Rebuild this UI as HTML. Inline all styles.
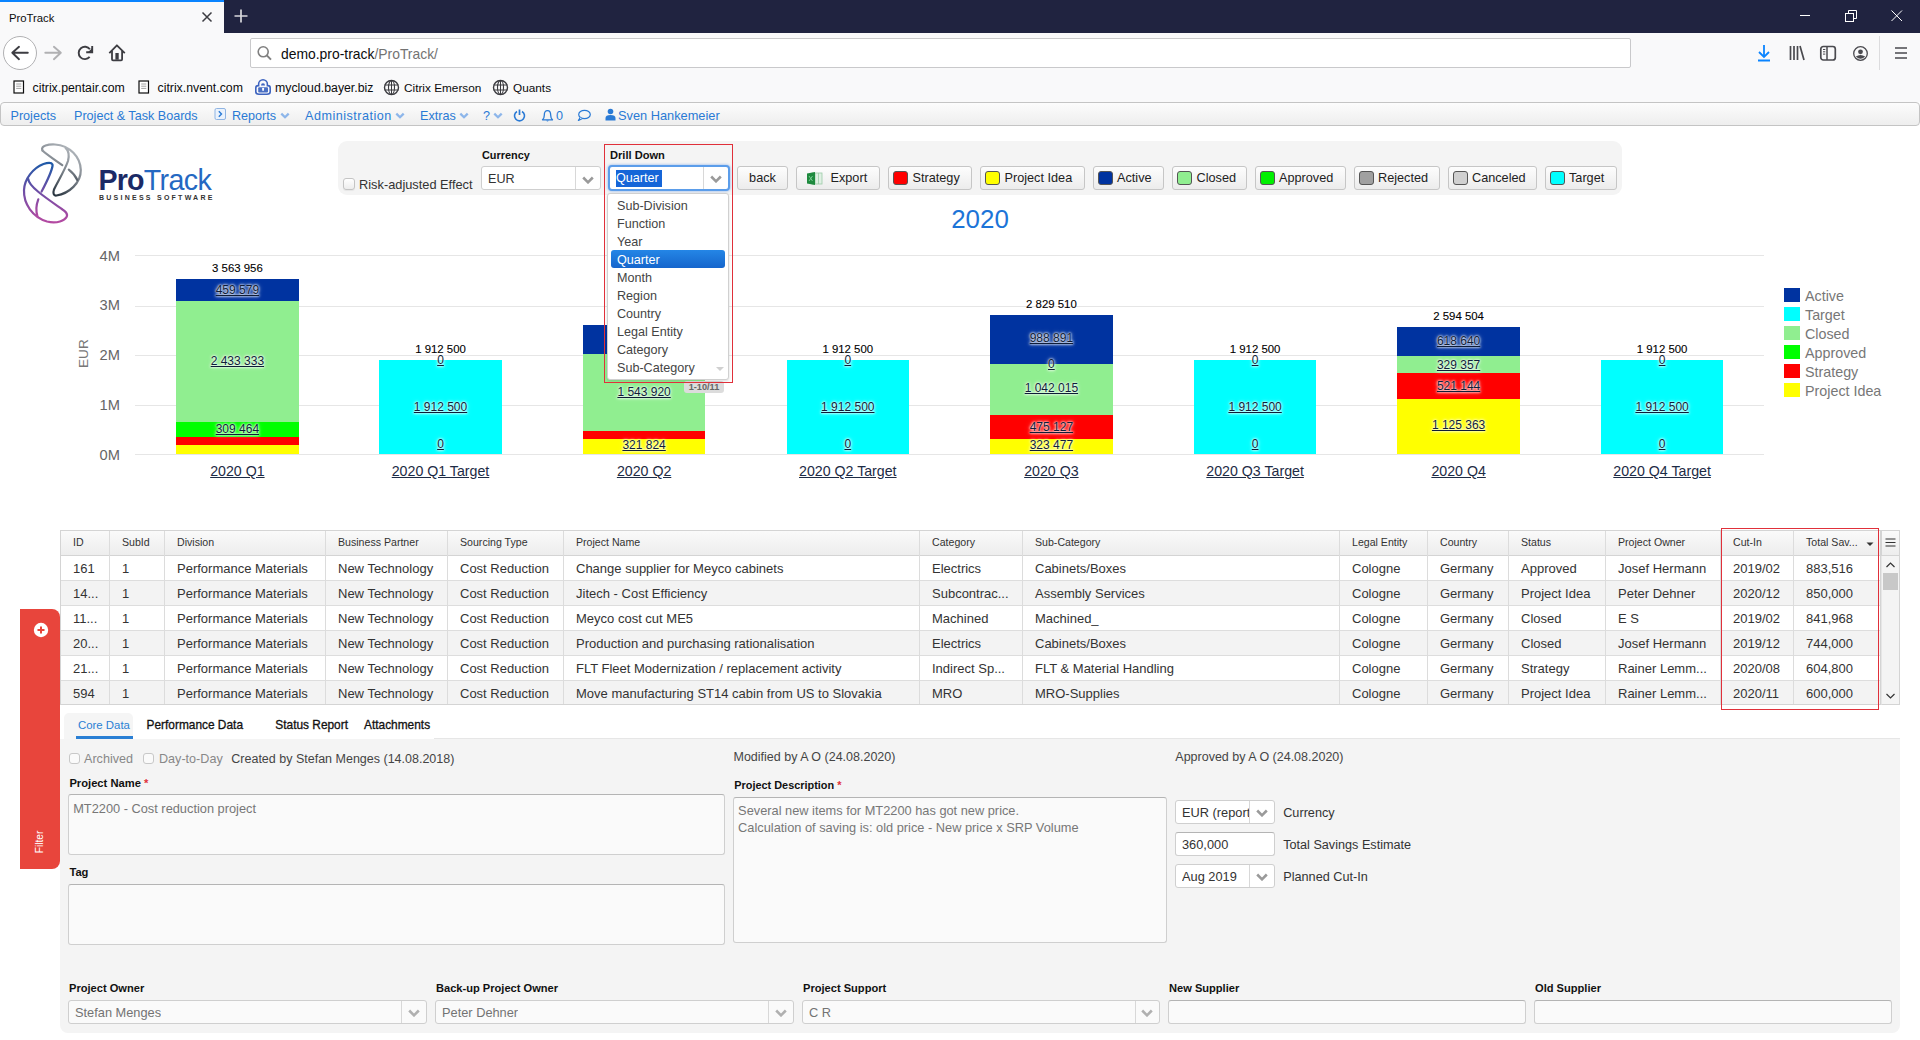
<!DOCTYPE html>
<html><head><meta charset="utf-8"><title>ProTrack</title>
<style>
html,body{margin:0;padding:0;width:1920px;height:1040px;overflow:hidden;background:#fff;position:relative}
body{font-family:"Liberation Sans", sans-serif}
.t{position:absolute;white-space:nowrap}
.r{position:absolute}
</style></head><body>
<div class="r" style="left:0px;top:0px;width:1920px;height:33px;background:#202340"></div>
<div class="r" style="left:0px;top:0px;width:224px;height:33px;background:#f9f9fa"></div>
<div class="r" style="left:0px;top:0px;width:224px;height:2px;background:#0a84ff"></div>
<div class="t " style="left:9px;top:10.5px;font-size:11.3px;line-height:15px;color:#0c0c0d;font-weight:normal;">ProTrack</div>
<svg class="r" style="left:201px;top:11px;" width="12" height="12" viewBox="0 0 12 12"><path d="M1.5 1.5L10.5 10.5M10.5 1.5L1.5 10.5" stroke="#3d3d42" stroke-width="1.5"/></svg>
<svg class="r" style="left:233px;top:8px;" width="16" height="16" viewBox="0 0 16 16"><path d="M8 1.5V14.5M1.5 8H14.5" stroke="#d8d8dc" stroke-width="1.7"/></svg>
<svg class="r" style="left:1798px;top:10px;" width="14" height="12" viewBox="0 0 14 12"><path d="M2 5.5H12" stroke="#fff" stroke-width="1"/></svg>
<svg class="r" style="left:1844px;top:9px;" width="14" height="14" viewBox="0 0 14 14"><rect x="1.5" y="4.5" width="8" height="8" fill="none" stroke="#fff" stroke-width="1"/><path d="M4.5 4.5V1.5H12.5V9.5H9.5" fill="none" stroke="#fff" stroke-width="1"/></svg>
<svg class="r" style="left:1890px;top:9px;" width="14" height="14" viewBox="0 0 14 14"><path d="M1.5 1.5L12 12M12 1.5L1.5 12" stroke="#fff" stroke-width="1"/></svg>
<div class="r" style="left:0px;top:33px;width:1920px;height:69px;background:#f9f9fa"></div>
<div class="r" style="left:3px;top:36px;width:34px;height:34px;border:1px solid #b1b1b3;border-radius:50%;box-sizing:border-box;background:#fff"></div>
<svg class="r" style="left:8px;top:44px;" width="22" height="18" viewBox="0 0 22 18"><path d="M4.3 8.8H19.8M4.3 8.8L11 2.8M4.3 8.8L11 15.2" fill="none" stroke="#3d3d42" stroke-width="1.9" stroke-linecap="round" stroke-linejoin="round"/></svg>
<svg class="r" style="left:42px;top:44px;" width="22" height="18" viewBox="0 0 22 18"><path d="M3.3 8.8H18.8M18.8 8.8L11.9 2.8M18.8 8.8L11.9 15.2" fill="none" stroke="#b1b1b3" stroke-width="1.9" stroke-linecap="round" stroke-linejoin="round"/></svg>
<svg class="r" style="left:77px;top:45px;" width="17" height="16" viewBox="0 0 17 16"><path d="M12.65 11.89A6.2 6.2 0 1 1 12.92 4.26" fill="none" stroke="#3d3d42" stroke-width="1.9"/><path d="M9.2 7.2H15.2V1.1" fill="none" stroke="#3d3d42" stroke-width="1.9"/><path d="M11 7.2H15.2V3Z" fill="#3d3d42"/></svg>
<svg class="r" style="left:108px;top:44px;" width="18" height="18" viewBox="0 0 18 18"><path d="M1.3 9.2L8.9 1.3L16.8 9.2" fill="none" stroke="#3d3d42" stroke-width="1.8" stroke-linejoin="round"/><path d="M4 7V15.3Q4 16.3 5 16.3H13.1Q14.1 16.3 14.1 15.3V7" fill="none" stroke="#3d3d42" stroke-width="1.8"/><rect x="7.4" y="9" width="3.3" height="6.7" fill="#3d3d42"/></svg>
<div class="r" style="left:250px;top:38px;width:1381px;height:30px;background:#fff;border:1px solid #c9c9cb;border-radius:2px;box-sizing:border-box"></div>
<svg class="r" style="left:256px;top:45px;" width="18" height="18" viewBox="0 0 18 18"><circle cx="7.2" cy="6.8" r="5" fill="none" stroke="#808080" stroke-width="1.6"/><path d="M10.8 10.4L15 14.6" stroke="#808080" stroke-width="2"/></svg>
<div class="t " style="left:281px;top:45.0px;font-size:13.9px;line-height:18px;color:#0c0c0d;font-weight:normal;">demo.pro-track<span style="color:#737373">/ProTrack/</span></div>
<svg class="r" style="left:1756px;top:43px;" width="16" height="20" viewBox="0 0 16 20"><path d="M8 2V14M3 9L8 14L13 9" fill="none" stroke="#0a84ff" stroke-width="1.8"/><path d="M2 17.5H14" stroke="#0a84ff" stroke-width="2"/></svg>
<svg class="r" style="left:1788px;top:45px;" width="18" height="16" viewBox="0 0 18 16"><path d="M2.5 1V15M6 1V15M9.5 1V15M12 1L16 15" stroke="#4a4a4f" stroke-width="1.7"/></svg>
<svg class="r" style="left:1819px;top:45px;" width="18" height="17" viewBox="0 0 18 17"><rect x="1.8" y="1.5" width="14.5" height="13.5" rx="2.5" fill="none" stroke="#4a4a4f" stroke-width="1.7"/><path d="M8 1.5V15" stroke="#4a4a4f" stroke-width="1.5"/><path d="M4 4.5H6.3M4 6.8H6.3M4 9.1H6.3" stroke="#4a4a4f" stroke-width="1"/></svg>
<svg class="r" style="left:1852px;top:45px;" width="17" height="17" viewBox="0 0 17 17"><circle cx="8.5" cy="8.5" r="6.8" fill="none" stroke="#4a4a4f" stroke-width="1.3"/><circle cx="8.5" cy="6.8" r="2.4" fill="#4a4a4f"/><path d="M3.8 11.6Q8.5 8.3 13.2 11.6Q8.5 16 3.8 11.6Z" fill="#4a4a4f"/></svg>
<div class="r" style="left:1879px;top:36px;width:1px;height:34px;background:#dcdcde"></div>
<svg class="r" style="left:1894px;top:46px;" width="14" height="14" viewBox="0 0 14 14"><path d="M1 2H13M1 7H13M1 12H13" stroke="#4a4a4f" stroke-width="1.7"/></svg>
<svg class="r" style="left:13px;top:80px;" width="12" height="15" viewBox="0 0 12 15"><rect x="1" y="1" width="9.5" height="12" fill="#fff" stroke="#0c0c0d" stroke-width="1.2"/><path d="M3.2 4H8.3M3.2 6.2H8.3M3.2 8.4H8.3" stroke="#8a8a8a" stroke-width="0.8"/></svg>
<div class="t " style="left:32.5px;top:80.2px;font-size:12.3px;line-height:16px;color:#0c0c0d;font-weight:normal;">citrix.pentair.com</div>
<svg class="r" style="left:138px;top:80px;" width="12" height="15" viewBox="0 0 12 15"><rect x="1" y="1" width="9.5" height="12" fill="#fff" stroke="#0c0c0d" stroke-width="1.2"/><path d="M3.2 4H8.3M3.2 6.2H8.3M3.2 8.4H8.3" stroke="#8a8a8a" stroke-width="0.8"/></svg>
<div class="t " style="left:157.5px;top:80.2px;font-size:12.3px;line-height:16px;color:#0c0c0d;font-weight:normal;">citrix.nvent.com</div>
<svg class="r" style="left:255px;top:79px;" width="16" height="16" viewBox="0 0 16 16"><path d="M3.6 6.6V5.2A4.4 4.4 0 0 1 12.4 5.2V6.6H13Q15.2 6.6 15.2 9V12.8Q15.2 15.2 12 15.2H4Q0.8 15.2 0.8 12.8V9Q0.8 6.6 3 6.6Z" fill="none" stroke="#3d63bf" stroke-width="1.6"/><path d="M6 6.5A2 2.3 0 0 1 10 6.5Z" fill="#3d63bf"/><rect x="3.2" y="8.2" width="9.8" height="5.4" rx="1" fill="#4a6fc3"/><path d="M7 9.8A1.1 1.1 0 1 1 9.2 9.8L8.6 12H7.6Z" fill="#fff"/></svg>
<div class="t " style="left:275px;top:80.2px;font-size:12.3px;line-height:16px;color:#0c0c0d;font-weight:normal;">mycloud.bayer.biz</div>
<svg class="r" style="left:383px;top:79px;" width="17" height="17" viewBox="0 0 17 17"><circle cx="8.5" cy="8.5" r="7" fill="none" stroke="#3a3a3f" stroke-width="1.4"/><ellipse cx="8.5" cy="8.5" rx="3" ry="7" fill="none" stroke="#3a3a3f" stroke-width="1.1"/><path d="M1.5 6H15.5M1.5 11H15.5M8.5 1.5V15.5" stroke="#3a3a3f" stroke-width="1"/></svg>
<div class="t " style="left:404px;top:80.7px;font-size:11.8px;line-height:15px;color:#0c0c0d;font-weight:normal;">Citrix Emerson</div>
<svg class="r" style="left:492px;top:79px;" width="17" height="17" viewBox="0 0 17 17"><circle cx="8.5" cy="8.5" r="7" fill="none" stroke="#3a3a3f" stroke-width="1.4"/><ellipse cx="8.5" cy="8.5" rx="3" ry="7" fill="none" stroke="#3a3a3f" stroke-width="1.1"/><path d="M1.5 6H15.5M1.5 11H15.5M8.5 1.5V15.5" stroke="#3a3a3f" stroke-width="1"/></svg>
<div class="t " style="left:513px;top:80.7px;font-size:11.8px;line-height:15px;color:#0c0c0d;font-weight:normal;">Quants</div>
<div class="r" style="left:0px;top:102px;width:1920px;height:24px;border:1px solid #c4c4c4;border-radius:4px;box-sizing:border-box;background:linear-gradient(#fcfcfc,#eeeeee)"></div>
<div class="t " style="left:10.5px;top:107.7px;font-size:12.6px;line-height:16px;color:#2a7ad5;font-weight:normal;">Projects</div>
<div class="t " style="left:74px;top:107.7px;font-size:12.6px;line-height:16px;color:#2a7ad5;font-weight:normal;">Project &amp; Task Boards</div>
<svg class="r" style="left:214px;top:107px;" width="13" height="14" viewBox="0 0 13 14"><rect x="1" y="1.5" width="10.5" height="11" rx="1.5" fill="#eaf2fc" stroke="#8fb4e3" stroke-width="1"/><path d="M4.8 4.3L7.5 7L4.8 9.7" fill="none" stroke="#2a7ad5" stroke-width="1.4"/></svg>
<div class="t " style="left:232px;top:107.7px;font-size:12.6px;line-height:16px;color:#2a7ad5;font-weight:normal;">Reports</div>
<svg class="r" style="left:280px;top:112px;" width="10" height="7" viewBox="0 0 10 7"><path d="M1.3 1.6L5 5.2L8.7 1.6" fill="none" stroke="#8db6ea" stroke-width="2.3"/></svg>
<div class="t " style="left:305px;top:107.7px;font-size:12.6px;line-height:16px;color:#2a7ad5;font-weight:normal;letter-spacing:0.5px">Administration</div>
<svg class="r" style="left:395px;top:112px;" width="10" height="7" viewBox="0 0 10 7"><path d="M1.3 1.6L5 5.2L8.7 1.6" fill="none" stroke="#8db6ea" stroke-width="2.3"/></svg>
<div class="t " style="left:420px;top:107.7px;font-size:12.6px;line-height:16px;color:#2a7ad5;font-weight:normal;">Extras</div>
<svg class="r" style="left:459px;top:112px;" width="10" height="7" viewBox="0 0 10 7"><path d="M1.3 1.6L5 5.2L8.7 1.6" fill="none" stroke="#8db6ea" stroke-width="2.3"/></svg>
<div class="t " style="left:483px;top:107.7px;font-size:12.6px;line-height:16px;color:#2a7ad5;font-weight:normal;">?</div>
<svg class="r" style="left:493px;top:112px;" width="10" height="7" viewBox="0 0 10 7"><path d="M1.3 1.6L5 5.2L8.7 1.6" fill="none" stroke="#8db6ea" stroke-width="2.3"/></svg>
<svg class="r" style="left:513px;top:108px;" width="13" height="14" viewBox="0 0 13 14"><path d="M4 3.5A5 5 0 1 0 9 3.5" fill="none" stroke="#2a7ad5" stroke-width="1.6"/><path d="M6.5 1.5V7" stroke="#2a7ad5" stroke-width="1.7"/></svg>
<svg class="r" style="left:541px;top:109px;" width="13" height="14" viewBox="0 0 13 14"><path d="M1.5 10.8Q3.3 9.2 3.3 6.2Q3.3 1.6 6.5 1.6Q9.7 1.6 9.7 6.2Q9.7 9.2 11.5 10.8Z" fill="none" stroke="#2a7ad5" stroke-width="1.3" stroke-linejoin="round"/><path d="M5.2 11.6Q6.5 13.6 7.8 11.6Z" fill="#2a7ad5"/></svg>
<div class="t " style="left:556px;top:107.7px;font-size:12.6px;line-height:16px;color:#2a7ad5;font-weight:normal;">0</div>
<svg class="r" style="left:577px;top:109px;" width="14" height="12" viewBox="0 0 14 12"><ellipse cx="7.5" cy="5.5" rx="5.8" ry="4.2" fill="none" stroke="#2a7ad5" stroke-width="1.2"/><path d="M3 8.5L1.5 11.5L5.5 9.6" fill="#fff" stroke="#2a7ad5" stroke-width="1.1"/></svg>
<svg class="r" style="left:605px;top:108px;" width="11" height="13" viewBox="0 0 11 13"><circle cx="5.5" cy="3.5" r="2.8" fill="#2a7ad5"/><path d="M0.5 12.5V10Q0.5 7 5.5 7Q10.5 7 10.5 10V12.5Z" fill="#2a7ad5"/></svg>
<div class="t " style="left:618px;top:107.2px;font-size:12.8px;line-height:17px;color:#2a7ad5;font-weight:normal;">Sven Hankemeier</div>
<svg class="r" style="left:18px;top:140px" width="70" height="88" viewBox="0 0 70 88">
<defs>
<linearGradient id="lg1" x1="0" y1="0" x2="0" y2="1"><stop offset="0" stop-color="#1f5aa8"/><stop offset="0.45" stop-color="#6a4ea6"/><stop offset="1" stop-color="#b44aa2"/></linearGradient>
<linearGradient id="lg2" x1="0.8" y1="0" x2="0.3" y2="1"><stop offset="0" stop-color="#b9bec3"/><stop offset="0.5" stop-color="#7d848c"/><stop offset="1" stop-color="#25313c"/></linearGradient>
</defs>
<g fill="none" stroke-width="2.2" stroke-linecap="round">
<path d="M24.5 10.5C22 5.5 31 4.2 37 4.5C52 5.5 62.5 17 62.8 30C63 43 51 53.5 38.5 55.5C35.5 56 34.8 53 36 49.5C39.5 42 46.5 31 50 21C51.5 15 50.5 10.5 47.4 7.6" stroke="url(#lg2)"/>
<path d="M24.5 10.5C28 14 37 20 44.3 25.2M50.8 29.6C54 32 57.5 36 59.3 40" stroke="url(#lg2)"/>
<path d="M34.5 24.5C33.5 22.3 29 22.8 25.5 24C15 28 6.5 39 6 50C5.5 64 14.5 77 29 81.5C39 84 47 80.5 48.8 76.5C49.8 74 47.5 71.5 44.5 69.5C36 63.5 26.5 57 20.5 52C15 47.5 10.5 43.5 10.3 39" stroke="url(#lg1)"/>
<path d="M34.6 25.5C34 30 31.5 36.5 23.6 51.6M20.3 59.3C18.3 64.5 17.6 70.5 19.5 76.5" stroke="url(#lg1)"/>
</g>
</svg>
<div class="t " style="left:98.5px;top:163.0px;font-size:28.6px;line-height:34px;color:#1d2f6e;font-weight:normal;"><span style="color:#1b2a66;font-weight:bold;letter-spacing:-0.8px">Pro</span><span style="color:#2468c2;letter-spacing:-0.6px">Track</span></div>
<div class="t " style="left:99px;top:193.0px;font-size:7px;line-height:9px;color:#333;font-weight:bold;letter-spacing:2.25px">BUSINESS SOFTWARE</div>
<div class="r" style="left:338px;top:141px;width:1284px;height:54px;background:#f4f4f4;border-radius:9px"></div>
<div class="r" style="left:343px;top:178px;width:12px;height:12px;border:1px solid #c4c4c4;border-radius:3px;box-sizing:border-box;background:linear-gradient(#fff,#ededed);box-shadow:0 1px 1px rgba(0,0,0,0.06)"></div>
<div class="t " style="left:359px;top:175.5px;font-size:12.8px;line-height:17px;color:#333;font-weight:normal;">Risk-adjusted Effect</div>
<div class="t " style="left:482px;top:148.0px;font-size:10.9px;line-height:14px;color:#111;font-weight:bold;">Currency</div>
<div class="r" style="left:481px;top:166px;width:120px;height:24px;background:#fff;border:1px solid #cfcfcf;border-radius:3px;box-sizing:border-box;"></div>
<div class="r" style="left:575px;top:167px;width:1px;height:22px;background:#d8d8d8"></div>
<svg class="r" style="left:582px;top:176px;" width="12" height="8" viewBox="0 0 12 8"><path d="M1.2 1.5L6 6.3L10.8 1.5" fill="none" stroke="#9a9a9a" stroke-width="2.6"/></svg>
<div class="t " style="left:488px;top:170.7px;font-size:12.6px;line-height:16px;color:#333;font-weight:normal;">EUR</div>
<div class="r" style="left:60px;top:530px;width:1840px;height:175px;border:1px solid #d4d4d4;box-sizing:border-box;background:#fff"></div>
<div class="r" style="left:61px;top:531px;width:1819px;height:24px;background:linear-gradient(#fafafa,#ededed)"></div>
<div class="r" style="left:60px;top:555px;width:1820px;height:1px;background:#d4d4d4"></div>
<div class="r" style="left:61px;top:580px;width:1819px;height:1px;background:#dddddd"></div>
<div class="r" style="left:61px;top:581px;width:1819px;height:24px;background:#f3f3f3"></div>
<div class="r" style="left:61px;top:605px;width:1819px;height:1px;background:#dddddd"></div>
<div class="r" style="left:61px;top:630px;width:1819px;height:1px;background:#dddddd"></div>
<div class="r" style="left:61px;top:631px;width:1819px;height:24px;background:#f3f3f3"></div>
<div class="r" style="left:61px;top:655px;width:1819px;height:1px;background:#dddddd"></div>
<div class="r" style="left:61px;top:680px;width:1819px;height:1px;background:#dddddd"></div>
<div class="r" style="left:61px;top:681px;width:1819px;height:23px;background:#f3f3f3"></div>
<div class="r" style="left:109px;top:531px;width:1px;height:173px;background:#dcdcdc"></div>
<div class="r" style="left:164px;top:531px;width:1px;height:173px;background:#dcdcdc"></div>
<div class="r" style="left:325px;top:531px;width:1px;height:173px;background:#dcdcdc"></div>
<div class="r" style="left:447px;top:531px;width:1px;height:173px;background:#dcdcdc"></div>
<div class="r" style="left:563px;top:531px;width:1px;height:173px;background:#dcdcdc"></div>
<div class="r" style="left:919px;top:531px;width:1px;height:173px;background:#dcdcdc"></div>
<div class="r" style="left:1022px;top:531px;width:1px;height:173px;background:#dcdcdc"></div>
<div class="r" style="left:1339px;top:531px;width:1px;height:173px;background:#dcdcdc"></div>
<div class="r" style="left:1427px;top:531px;width:1px;height:173px;background:#dcdcdc"></div>
<div class="r" style="left:1508px;top:531px;width:1px;height:173px;background:#dcdcdc"></div>
<div class="r" style="left:1605px;top:531px;width:1px;height:173px;background:#dcdcdc"></div>
<div class="r" style="left:1720px;top:531px;width:1px;height:173px;background:#dcdcdc"></div>
<div class="r" style="left:1793px;top:531px;width:1px;height:173px;background:#dcdcdc"></div>
<div class="r" style="left:1880px;top:531px;width:1px;height:174px;background:#d4d4d4"></div>
<div class="t " style="left:73px;top:534.8px;font-size:10.6px;line-height:14px;color:#333;font-weight:normal;">ID</div>
<div class="t " style="left:122px;top:534.8px;font-size:10.6px;line-height:14px;color:#333;font-weight:normal;">SubId</div>
<div class="t " style="left:177px;top:534.8px;font-size:10.6px;line-height:14px;color:#333;font-weight:normal;">Division</div>
<div class="t " style="left:338px;top:534.8px;font-size:10.6px;line-height:14px;color:#333;font-weight:normal;">Business Partner</div>
<div class="t " style="left:460px;top:534.8px;font-size:10.6px;line-height:14px;color:#333;font-weight:normal;">Sourcing Type</div>
<div class="t " style="left:576px;top:534.8px;font-size:10.6px;line-height:14px;color:#333;font-weight:normal;">Project Name</div>
<div class="t " style="left:932px;top:534.8px;font-size:10.6px;line-height:14px;color:#333;font-weight:normal;">Category</div>
<div class="t " style="left:1035px;top:534.8px;font-size:10.6px;line-height:14px;color:#333;font-weight:normal;">Sub-Category</div>
<div class="t " style="left:1352px;top:534.8px;font-size:10.6px;line-height:14px;color:#333;font-weight:normal;">Legal Entity</div>
<div class="t " style="left:1440px;top:534.8px;font-size:10.6px;line-height:14px;color:#333;font-weight:normal;">Country</div>
<div class="t " style="left:1521px;top:534.8px;font-size:10.6px;line-height:14px;color:#333;font-weight:normal;">Status</div>
<div class="t " style="left:1618px;top:534.8px;font-size:10.6px;line-height:14px;color:#333;font-weight:normal;">Project Owner</div>
<div class="t " style="left:1733px;top:534.8px;font-size:10.6px;line-height:14px;color:#333;font-weight:normal;">Cut-In</div>
<div class="t " style="left:1806px;top:534.8px;font-size:10.6px;line-height:14px;color:#333;font-weight:normal;">Total Sav...</div>
<div class="t " style="left:73px;top:559.8px;font-size:13px;line-height:17px;color:#333;font-weight:normal;">161</div>
<div class="t " style="left:122px;top:559.8px;font-size:13px;line-height:17px;color:#333;font-weight:normal;">1</div>
<div class="t " style="left:177px;top:559.8px;font-size:13px;line-height:17px;color:#333;font-weight:normal;">Performance Materials</div>
<div class="t " style="left:338px;top:559.8px;font-size:13px;line-height:17px;color:#333;font-weight:normal;">New Technology</div>
<div class="t " style="left:460px;top:559.8px;font-size:13px;line-height:17px;color:#333;font-weight:normal;">Cost Reduction</div>
<div class="t " style="left:576px;top:559.8px;font-size:13px;line-height:17px;color:#333;font-weight:normal;">Change supplier for Meyco cabinets</div>
<div class="t " style="left:932px;top:559.8px;font-size:13px;line-height:17px;color:#333;font-weight:normal;">Electrics</div>
<div class="t " style="left:1035px;top:559.8px;font-size:13px;line-height:17px;color:#333;font-weight:normal;">Cabinets/Boxes</div>
<div class="t " style="left:1352px;top:559.8px;font-size:13px;line-height:17px;color:#333;font-weight:normal;">Cologne</div>
<div class="t " style="left:1440px;top:559.8px;font-size:13px;line-height:17px;color:#333;font-weight:normal;">Germany</div>
<div class="t " style="left:1521px;top:559.8px;font-size:13px;line-height:17px;color:#333;font-weight:normal;">Approved</div>
<div class="t " style="left:1618px;top:559.8px;font-size:13px;line-height:17px;color:#333;font-weight:normal;">Josef Hermann</div>
<div class="t " style="left:1733px;top:559.8px;font-size:13px;line-height:17px;color:#333;font-weight:normal;">2019/02</div>
<div class="t " style="left:1806px;top:559.8px;font-size:13px;line-height:17px;color:#333;font-weight:normal;">883,516</div>
<div class="t " style="left:73px;top:584.8px;font-size:13px;line-height:17px;color:#333;font-weight:normal;">14...</div>
<div class="t " style="left:122px;top:584.8px;font-size:13px;line-height:17px;color:#333;font-weight:normal;">1</div>
<div class="t " style="left:177px;top:584.8px;font-size:13px;line-height:17px;color:#333;font-weight:normal;">Performance Materials</div>
<div class="t " style="left:338px;top:584.8px;font-size:13px;line-height:17px;color:#333;font-weight:normal;">New Technology</div>
<div class="t " style="left:460px;top:584.8px;font-size:13px;line-height:17px;color:#333;font-weight:normal;">Cost Reduction</div>
<div class="t " style="left:576px;top:584.8px;font-size:13px;line-height:17px;color:#333;font-weight:normal;">Jitech - Cost Efficiency</div>
<div class="t " style="left:932px;top:584.8px;font-size:13px;line-height:17px;color:#333;font-weight:normal;">Subcontrac...</div>
<div class="t " style="left:1035px;top:584.8px;font-size:13px;line-height:17px;color:#333;font-weight:normal;">Assembly Services</div>
<div class="t " style="left:1352px;top:584.8px;font-size:13px;line-height:17px;color:#333;font-weight:normal;">Cologne</div>
<div class="t " style="left:1440px;top:584.8px;font-size:13px;line-height:17px;color:#333;font-weight:normal;">Germany</div>
<div class="t " style="left:1521px;top:584.8px;font-size:13px;line-height:17px;color:#333;font-weight:normal;">Project Idea</div>
<div class="t " style="left:1618px;top:584.8px;font-size:13px;line-height:17px;color:#333;font-weight:normal;">Peter Dehner</div>
<div class="t " style="left:1733px;top:584.8px;font-size:13px;line-height:17px;color:#333;font-weight:normal;">2020/12</div>
<div class="t " style="left:1806px;top:584.8px;font-size:13px;line-height:17px;color:#333;font-weight:normal;">850,000</div>
<div class="t " style="left:73px;top:609.8px;font-size:13px;line-height:17px;color:#333;font-weight:normal;">11...</div>
<div class="t " style="left:122px;top:609.8px;font-size:13px;line-height:17px;color:#333;font-weight:normal;">1</div>
<div class="t " style="left:177px;top:609.8px;font-size:13px;line-height:17px;color:#333;font-weight:normal;">Performance Materials</div>
<div class="t " style="left:338px;top:609.8px;font-size:13px;line-height:17px;color:#333;font-weight:normal;">New Technology</div>
<div class="t " style="left:460px;top:609.8px;font-size:13px;line-height:17px;color:#333;font-weight:normal;">Cost Reduction</div>
<div class="t " style="left:576px;top:609.8px;font-size:13px;line-height:17px;color:#333;font-weight:normal;">Meyco cost cut ME5</div>
<div class="t " style="left:932px;top:609.8px;font-size:13px;line-height:17px;color:#333;font-weight:normal;">Machined</div>
<div class="t " style="left:1035px;top:609.8px;font-size:13px;line-height:17px;color:#333;font-weight:normal;">Machined_</div>
<div class="t " style="left:1352px;top:609.8px;font-size:13px;line-height:17px;color:#333;font-weight:normal;">Cologne</div>
<div class="t " style="left:1440px;top:609.8px;font-size:13px;line-height:17px;color:#333;font-weight:normal;">Germany</div>
<div class="t " style="left:1521px;top:609.8px;font-size:13px;line-height:17px;color:#333;font-weight:normal;">Closed</div>
<div class="t " style="left:1618px;top:609.8px;font-size:13px;line-height:17px;color:#333;font-weight:normal;">E S</div>
<div class="t " style="left:1733px;top:609.8px;font-size:13px;line-height:17px;color:#333;font-weight:normal;">2019/02</div>
<div class="t " style="left:1806px;top:609.8px;font-size:13px;line-height:17px;color:#333;font-weight:normal;">841,968</div>
<div class="t " style="left:73px;top:634.8px;font-size:13px;line-height:17px;color:#333;font-weight:normal;">20...</div>
<div class="t " style="left:122px;top:634.8px;font-size:13px;line-height:17px;color:#333;font-weight:normal;">1</div>
<div class="t " style="left:177px;top:634.8px;font-size:13px;line-height:17px;color:#333;font-weight:normal;">Performance Materials</div>
<div class="t " style="left:338px;top:634.8px;font-size:13px;line-height:17px;color:#333;font-weight:normal;">New Technology</div>
<div class="t " style="left:460px;top:634.8px;font-size:13px;line-height:17px;color:#333;font-weight:normal;">Cost Reduction</div>
<div class="t " style="left:576px;top:634.8px;font-size:13px;line-height:17px;color:#333;font-weight:normal;">Production and purchasing rationalisation</div>
<div class="t " style="left:932px;top:634.8px;font-size:13px;line-height:17px;color:#333;font-weight:normal;">Electrics</div>
<div class="t " style="left:1035px;top:634.8px;font-size:13px;line-height:17px;color:#333;font-weight:normal;">Cabinets/Boxes</div>
<div class="t " style="left:1352px;top:634.8px;font-size:13px;line-height:17px;color:#333;font-weight:normal;">Cologne</div>
<div class="t " style="left:1440px;top:634.8px;font-size:13px;line-height:17px;color:#333;font-weight:normal;">Germany</div>
<div class="t " style="left:1521px;top:634.8px;font-size:13px;line-height:17px;color:#333;font-weight:normal;">Closed</div>
<div class="t " style="left:1618px;top:634.8px;font-size:13px;line-height:17px;color:#333;font-weight:normal;">Josef Hermann</div>
<div class="t " style="left:1733px;top:634.8px;font-size:13px;line-height:17px;color:#333;font-weight:normal;">2019/12</div>
<div class="t " style="left:1806px;top:634.8px;font-size:13px;line-height:17px;color:#333;font-weight:normal;">744,000</div>
<div class="t " style="left:73px;top:659.8px;font-size:13px;line-height:17px;color:#333;font-weight:normal;">21...</div>
<div class="t " style="left:122px;top:659.8px;font-size:13px;line-height:17px;color:#333;font-weight:normal;">1</div>
<div class="t " style="left:177px;top:659.8px;font-size:13px;line-height:17px;color:#333;font-weight:normal;">Performance Materials</div>
<div class="t " style="left:338px;top:659.8px;font-size:13px;line-height:17px;color:#333;font-weight:normal;">New Technology</div>
<div class="t " style="left:460px;top:659.8px;font-size:13px;line-height:17px;color:#333;font-weight:normal;">Cost Reduction</div>
<div class="t " style="left:576px;top:659.8px;font-size:13px;line-height:17px;color:#333;font-weight:normal;">FLT Fleet Modernization / replacement activity</div>
<div class="t " style="left:932px;top:659.8px;font-size:13px;line-height:17px;color:#333;font-weight:normal;">Indirect Sp...</div>
<div class="t " style="left:1035px;top:659.8px;font-size:13px;line-height:17px;color:#333;font-weight:normal;">FLT &amp; Material Handling</div>
<div class="t " style="left:1352px;top:659.8px;font-size:13px;line-height:17px;color:#333;font-weight:normal;">Cologne</div>
<div class="t " style="left:1440px;top:659.8px;font-size:13px;line-height:17px;color:#333;font-weight:normal;">Germany</div>
<div class="t " style="left:1521px;top:659.8px;font-size:13px;line-height:17px;color:#333;font-weight:normal;">Strategy</div>
<div class="t " style="left:1618px;top:659.8px;font-size:13px;line-height:17px;color:#333;font-weight:normal;">Rainer Lemm...</div>
<div class="t " style="left:1733px;top:659.8px;font-size:13px;line-height:17px;color:#333;font-weight:normal;">2020/08</div>
<div class="t " style="left:1806px;top:659.8px;font-size:13px;line-height:17px;color:#333;font-weight:normal;">604,800</div>
<div class="t " style="left:73px;top:684.8px;font-size:13px;line-height:17px;color:#333;font-weight:normal;">594</div>
<div class="t " style="left:122px;top:684.8px;font-size:13px;line-height:17px;color:#333;font-weight:normal;">1</div>
<div class="t " style="left:177px;top:684.8px;font-size:13px;line-height:17px;color:#333;font-weight:normal;">Performance Materials</div>
<div class="t " style="left:338px;top:684.8px;font-size:13px;line-height:17px;color:#333;font-weight:normal;">New Technology</div>
<div class="t " style="left:460px;top:684.8px;font-size:13px;line-height:17px;color:#333;font-weight:normal;">Cost Reduction</div>
<div class="t " style="left:576px;top:684.8px;font-size:13px;line-height:17px;color:#333;font-weight:normal;">Move manufacturing ST14 cabin from US to Slovakia</div>
<div class="t " style="left:932px;top:684.8px;font-size:13px;line-height:17px;color:#333;font-weight:normal;">MRO</div>
<div class="t " style="left:1035px;top:684.8px;font-size:13px;line-height:17px;color:#333;font-weight:normal;">MRO-Supplies</div>
<div class="t " style="left:1352px;top:684.8px;font-size:13px;line-height:17px;color:#333;font-weight:normal;">Cologne</div>
<div class="t " style="left:1440px;top:684.8px;font-size:13px;line-height:17px;color:#333;font-weight:normal;">Germany</div>
<div class="t " style="left:1521px;top:684.8px;font-size:13px;line-height:17px;color:#333;font-weight:normal;">Project Idea</div>
<div class="t " style="left:1618px;top:684.8px;font-size:13px;line-height:17px;color:#333;font-weight:normal;">Rainer Lemm...</div>
<div class="t " style="left:1733px;top:684.8px;font-size:13px;line-height:17px;color:#333;font-weight:normal;">2020/11</div>
<div class="t " style="left:1806px;top:684.8px;font-size:13px;line-height:17px;color:#333;font-weight:normal;">600,000</div>
<svg class="r" style="left:1866px;top:542px;" width="8" height="5" viewBox="0 0 8 5"><path d="M0.5 0.5H7.5L4 4Z" fill="#333"/></svg>
<div class="r" style="left:1881px;top:530px;width:19px;height:26px;background:linear-gradient(#fafafa,#ededed);border:1px solid #d4d4d4;box-sizing:border-box"></div>
<svg class="r" style="left:1885px;top:538px;" width="11" height="9" viewBox="0 0 11 9"><path d="M0.5 1H10.5M0.5 4.5H10.5M0.5 8H10.5" stroke="#333" stroke-width="1"/></svg>
<div class="r" style="left:1881px;top:556px;width:19px;height:149px;background:#f4f4f4;border-left:1px solid #e6e6e6;border-right:1px solid #d4d4d4;border-bottom:1px solid #d4d4d4;box-sizing:border-box"></div>
<svg class="r" style="left:1885px;top:561px;" width="11" height="8" viewBox="0 0 11 8"><path d="M1.5 6L5.5 2L9.5 6" fill="none" stroke="#333" stroke-width="1.2"/></svg>
<div class="r" style="left:1883px;top:573px;width:15px;height:17px;background:#c8c8c8"></div>
<svg class="r" style="left:1885px;top:692px;" width="11" height="8" viewBox="0 0 11 8"><path d="M1.5 2L5.5 6L9.5 2" fill="none" stroke="#333" stroke-width="1.2"/></svg>
<div class="r" style="left:1721px;top:528px;width:158px;height:182px;border:1px solid #e0303a;box-sizing:border-box"></div>
<div class="r" style="left:20px;top:609px;width:40px;height:260px;background:#e8453c;border-radius:0 8px 8px 0"></div>
<svg class="r" style="left:33px;top:622px;" width="16" height="16" viewBox="0 0 16 16"><circle cx="8" cy="8" r="7.2" fill="#fff"/><path d="M8 4.5V11.5M4.5 8H11.5" stroke="#e8443a" stroke-width="2"/></svg>
<div class="t" style="left:20px;top:832px;width:40px;height:20px;font-size:10.2px;line-height:20px;color:#fff;text-align:center;transform:rotate(-90deg)">Filter</div>
<div class="r" style="left:434px;top:738px;width:1466px;height:1px;background:#e6e6e6"></div>
<div class="r" style="left:64px;top:713px;width:69px;height:26px;background:#f5f5f5;border-radius:5px 5px 0 0"></div>
<div class="t " style="left:78px;top:717.5px;font-size:11.4px;line-height:15px;color:#2a7fd4;font-weight:normal;">Core Data</div>
<div class="r" style="left:76px;top:736px;width:57px;height:3px;background:#2a7fd4"></div>
<div class="t " style="left:146.5px;top:717.5px;font-size:11.9px;line-height:15px;color:#111;font-weight:normal;-webkit-text-stroke:0.3px #111">Performance Data</div>
<div class="t " style="left:275.3px;top:717.5px;font-size:11.9px;line-height:15px;color:#111;font-weight:normal;-webkit-text-stroke:0.3px #111">Status Report</div>
<div class="t " style="left:364px;top:717.5px;font-size:11.9px;line-height:15px;color:#111;font-weight:normal;-webkit-text-stroke:0.3px #111">Attachments</div>
<div class="r" style="left:60px;top:739px;width:1840px;height:294px;background:#f4f4f4;border-radius:0 0 8px 8px"></div>
<div class="r" style="left:69px;top:753px;width:11px;height:11px;border:1px solid #c8c8c8;border-radius:3px;box-sizing:border-box;background:#fafafa"></div>
<div class="t " style="left:84px;top:750.6px;font-size:12.6px;line-height:16px;color:#888;font-weight:normal;">Archived</div>
<div class="r" style="left:143px;top:753px;width:11px;height:11px;border:1px solid #c8c8c8;border-radius:3px;box-sizing:border-box;background:#fafafa"></div>
<div class="t " style="left:159px;top:750.6px;font-size:12.6px;line-height:16px;color:#888;font-weight:normal;">Day-to-Day</div>
<div class="t " style="left:231.3px;top:750.6px;font-size:12.5px;line-height:16px;color:#444;font-weight:normal;">Created by Stefan Menges (14.08.2018)</div>
<div class="t " style="left:69.4px;top:775.8px;font-size:11.2px;line-height:15px;color:#111;font-weight:bold;">Project Name <span style="color:#e0303a">*</span></div>
<div class="r" style="left:68px;top:794px;width:657px;height:61px;background:#fafafa;border:1px solid #cfcfcf;border-top-color:#b4b4b4;border-radius:3px;box-sizing:border-box"></div>
<div class="t " style="left:73.2px;top:799.5px;font-size:12.8px;line-height:17px;color:#777;font-weight:normal;">MT2200 - Cost reduction project</div>
<div class="t " style="left:69.4px;top:864.8px;font-size:11.2px;line-height:15px;color:#111;font-weight:bold;">Tag</div>
<div class="r" style="left:68px;top:884px;width:657px;height:61px;background:#fafafa;border:1px solid #cfcfcf;border-top-color:#b4b4b4;border-radius:3px;box-sizing:border-box"></div>
<div class="t " style="left:733.5px;top:748.6px;font-size:12.5px;line-height:16px;color:#444;font-weight:normal;">Modified by A O (24.08.2020)</div>
<div class="t " style="left:734.3px;top:778.1px;font-size:10.9px;line-height:14px;color:#111;font-weight:bold;">Project Description <span style="color:#e0303a">*</span></div>
<div class="r" style="left:733px;top:797px;width:434px;height:146px;background:#fafafa;border:1px solid #cfcfcf;border-top-color:#b4b4b4;border-radius:3px;box-sizing:border-box"></div>
<div class="t " style="left:738.1px;top:802.1px;font-size:12.8px;line-height:17px;color:#777;font-weight:normal;">Several new items for MT2200 has got new price.</div>
<div class="t " style="left:738.1px;top:819.0px;font-size:12.8px;line-height:17px;color:#777;font-weight:normal;">Calculation of saving is: old price - New price x SRP Volume</div>
<div class="t " style="left:1175.3px;top:748.6px;font-size:12.5px;line-height:16px;color:#444;font-weight:normal;">Approved by A O (24.08.2020)</div>
<div class="r" style="left:1175px;top:800px;width:100px;height:24px;background:#fff;border:1px solid #cfcfcf;border-radius:3px;box-sizing:border-box"></div>
<div class="r" style="left:1249px;top:801px;width:1px;height:22px;background:#d8d8d8"></div>
<svg class="r" style="left:1256px;top:809px;" width="12" height="8" viewBox="0 0 12 8"><path d="M1.2 1.5L6 6.3L10.8 1.5" fill="none" stroke="#9a9a9a" stroke-width="2.6"/></svg>
<div class="t " style="left:1182px;top:803.8px;font-size:12.8px;line-height:17px;color:#333;font-weight:normal;"><span style="display:inline-block;overflow:hidden;max-width:67px;vertical-align:top">EUR (report</span></div>
<div class="t " style="left:1283.2px;top:804.7px;font-size:12.7px;line-height:17px;color:#333;font-weight:normal;">Currency</div>
<div class="r" style="left:1175px;top:832px;width:100px;height:24px;background:#fff;border:1px solid #cfcfcf;border-top-color:#b4b4b4;border-radius:3px;box-sizing:border-box"></div>
<div class="t " style="left:1182px;top:836.0px;font-size:12.8px;line-height:17px;color:#333;font-weight:normal;">360,000</div>
<div class="t " style="left:1283.2px;top:836.5px;font-size:12.65px;line-height:16px;color:#333;font-weight:normal;">Total Savings Estimate</div>
<div class="r" style="left:1175px;top:864px;width:100px;height:24px;background:#fff;border:1px solid #cfcfcf;border-radius:3px;box-sizing:border-box"></div>
<div class="r" style="left:1249px;top:865px;width:1px;height:22px;background:#d8d8d8"></div>
<svg class="r" style="left:1256px;top:873px;" width="12" height="8" viewBox="0 0 12 8"><path d="M1.2 1.5L6 6.3L10.8 1.5" fill="none" stroke="#9a9a9a" stroke-width="2.6"/></svg>
<div class="t " style="left:1182px;top:867.8px;font-size:12.8px;line-height:17px;color:#333;font-weight:normal;"><span style="display:inline-block;overflow:hidden;max-width:67px;vertical-align:top">Aug 2019</span></div>
<div class="t " style="left:1283.2px;top:868.7px;font-size:12.7px;line-height:17px;color:#333;font-weight:normal;">Planned Cut-In</div>
<div class="t " style="left:69px;top:981.0px;font-size:11.1px;line-height:14px;color:#111;font-weight:bold;">Project Owner</div>
<div class="r" style="left:68px;top:1000px;width:359px;height:24px;background:#fafafa;border:1px solid #cfcfcf;border-radius:3px;box-sizing:border-box"></div>
<div class="r" style="left:401px;top:1001px;width:1px;height:22px;background:#d8d8d8"></div>
<svg class="r" style="left:408px;top:1009px;" width="12" height="8" viewBox="0 0 12 8"><path d="M1.2 1.5L6 6.3L10.8 1.5" fill="none" stroke="#b0b0b0" stroke-width="2.6"/></svg>
<div class="t " style="left:75px;top:1003.8px;font-size:12.8px;line-height:17px;color:#737373;font-weight:normal;"><span style="display:inline-block;overflow:hidden;max-width:326px;vertical-align:top">Stefan Menges</span></div>
<div class="t " style="left:436px;top:981.0px;font-size:11.1px;line-height:14px;color:#111;font-weight:bold;">Back-up Project Owner</div>
<div class="r" style="left:435px;top:1000px;width:359px;height:24px;background:#fafafa;border:1px solid #cfcfcf;border-radius:3px;box-sizing:border-box"></div>
<div class="r" style="left:768px;top:1001px;width:1px;height:22px;background:#d8d8d8"></div>
<svg class="r" style="left:775px;top:1009px;" width="12" height="8" viewBox="0 0 12 8"><path d="M1.2 1.5L6 6.3L10.8 1.5" fill="none" stroke="#b0b0b0" stroke-width="2.6"/></svg>
<div class="t " style="left:442px;top:1003.8px;font-size:12.8px;line-height:17px;color:#737373;font-weight:normal;"><span style="display:inline-block;overflow:hidden;max-width:326px;vertical-align:top">Peter Dehner</span></div>
<div class="t " style="left:803px;top:981.0px;font-size:11.1px;line-height:14px;color:#111;font-weight:bold;">Project Support</div>
<div class="r" style="left:802px;top:1000px;width:358px;height:24px;background:#fafafa;border:1px solid #cfcfcf;border-radius:3px;box-sizing:border-box"></div>
<div class="r" style="left:1134.5px;top:1001px;width:1.0px;height:22px;background:#d8d8d8"></div>
<svg class="r" style="left:1141px;top:1009px;" width="12" height="8" viewBox="0 0 12 8"><path d="M1.2 1.5L6 6.3L10.8 1.5" fill="none" stroke="#b0b0b0" stroke-width="2.6"/></svg>
<div class="t " style="left:809px;top:1003.8px;font-size:12.8px;line-height:17px;color:#737373;font-weight:normal;"><span style="display:inline-block;overflow:hidden;max-width:325.5px;vertical-align:top">C R</span></div>
<div class="t " style="left:1169px;top:981.0px;font-size:11.1px;line-height:14px;color:#111;font-weight:bold;">New Supplier</div>
<div class="r" style="left:1168px;top:1000px;width:358px;height:24px;background:#fafafa;border:1px solid #cfcfcf;border-top-color:#b4b4b4;border-radius:3px;box-sizing:border-box"></div>
<div class="t " style="left:1535px;top:981.0px;font-size:11.1px;line-height:14px;color:#111;font-weight:bold;">Old Supplier</div>
<div class="r" style="left:1534px;top:1000px;width:358px;height:24px;background:#fafafa;border:1px solid #cfcfcf;border-top-color:#b4b4b4;border-radius:3px;box-sizing:border-box"></div>
<div class="r" style="left:135px;top:255px;width:1629px;height:1px;background:#e6e6e6"></div>
<div class="t" style="left:60px;width:60px;text-align:right;top:246px;font-size:14.7px;line-height:20px;color:#666">4M</div>
<div class="r" style="left:135px;top:306px;width:1629px;height:1px;background:#e6e6e6"></div>
<div class="t" style="left:60px;width:60px;text-align:right;top:295.1px;font-size:14.7px;line-height:20px;color:#666">3M</div>
<div class="r" style="left:135px;top:355px;width:1629px;height:1px;background:#e6e6e6"></div>
<div class="t" style="left:60px;width:60px;text-align:right;top:345.4px;font-size:14.7px;line-height:20px;color:#666">2M</div>
<div class="r" style="left:135px;top:405px;width:1629px;height:1px;background:#e6e6e6"></div>
<div class="t" style="left:60px;width:60px;text-align:right;top:394.6px;font-size:14.7px;line-height:20px;color:#666">1M</div>
<div class="r" style="left:135px;top:454px;width:1629px;height:1px;background:#e6e6e6"></div>
<div class="t" style="left:60px;width:60px;text-align:right;top:444.8px;font-size:14.7px;line-height:20px;color:#666">0M</div>
<div class="t" style="left:74px;top:345px;width:20px;height:20px;font-size:13.6px;line-height:20px;color:#777;transform:rotate(-90deg);transform-origin:10px 10px;text-align:center"><span style="position:relative;left:-3px">EUR</span></div>
<div class="r" style="left:176.20px;top:279px;width:122.4px;height:22px;background:#0033a0"></div>
<div class="r" style="left:176.20px;top:301px;width:122.4px;height:121px;background:#90ee90"></div>
<div class="r" style="left:176.20px;top:422px;width:122.4px;height:15px;background:#00ff00"></div>
<div class="r" style="left:176.20px;top:437px;width:122.4px;height:8px;background:#ff0000"></div>
<div class="r" style="left:176.20px;top:445px;width:122.4px;height:9px;background:#ffff00"></div>
<div class="t" style="left:167.4px;width:140px;text-align:center;top:261.0px;font-size:11.4px;line-height:14px;color:#000;font-weight:normal;-webkit-text-stroke:0.1px #000">3 563 956</div>
<div class="t" style="left:167.4px;width:140px;text-align:center;top:281.5px;font-size:12px;line-height:16px;color:#0f1d38;font-weight:normal;text-decoration:underline;text-shadow:0 0 2px #fff,0 0 3px #fff,0 0 5px rgba(255,255,255,0.6)">459 579</div>
<div class="t" style="left:167.4px;width:140px;text-align:center;top:352.6px;font-size:12px;line-height:16px;color:#0f1d38;font-weight:normal;text-decoration:underline;text-shadow:0 0 2px #fff,0 0 3px #fff,0 0 5px rgba(255,255,255,0.6)">2 433 333</div>
<div class="t" style="left:167.4px;width:140px;text-align:center;top:420.5px;font-size:12px;line-height:16px;color:#0f1d38;font-weight:normal;text-decoration:underline;text-shadow:0 0 2px #fff,0 0 3px #fff,0 0 5px rgba(255,255,255,0.6)">309 464</div>
<div class="t" style="left:137.4px;width:200px;text-align:center;top:462.0px;font-size:14.2px;line-height:18px;color:#1d2b45;font-weight:normal;text-decoration:underline">2020 Q1</div>
<div class="r" style="left:379.30px;top:360px;width:122.4px;height:94px;background:#00ffff"></div>
<div class="t" style="left:370.5px;width:140px;text-align:center;top:342.0px;font-size:11.4px;line-height:14px;color:#000;font-weight:normal;-webkit-text-stroke:0.1px #000">1 912 500</div>
<div class="t" style="left:370.5px;width:140px;text-align:center;top:352.3px;font-size:12px;line-height:16px;color:#0f1d38;font-weight:normal;text-decoration:underline;text-shadow:0 0 2px #fff,0 0 3px #fff,0 0 5px rgba(255,255,255,0.6)">0</div>
<div class="t" style="left:370.5px;width:140px;text-align:center;top:398.7px;font-size:12px;line-height:16px;color:#0f1d38;font-weight:normal;text-decoration:underline;text-shadow:0 0 2px #fff,0 0 3px #fff,0 0 5px rgba(255,255,255,0.6)">1 912 500</div>
<div class="t" style="left:370.5px;width:140px;text-align:center;top:436.4px;font-size:12px;line-height:16px;color:#0f1d38;font-weight:normal;text-decoration:underline;text-shadow:0 0 2px #fff,0 0 3px #fff,0 0 5px rgba(255,255,255,0.6)">0</div>
<div class="t" style="left:340.5px;width:200px;text-align:center;top:462.0px;font-size:14.2px;line-height:18px;color:#1d2b45;font-weight:normal;text-decoration:underline">2020 Q1 Target</div>
<div class="r" style="left:786.60px;top:360px;width:122.4px;height:94px;background:#00ffff"></div>
<div class="t" style="left:777.8px;width:140px;text-align:center;top:342.0px;font-size:11.4px;line-height:14px;color:#000;font-weight:normal;-webkit-text-stroke:0.1px #000">1 912 500</div>
<div class="t" style="left:777.8px;width:140px;text-align:center;top:352.3px;font-size:12px;line-height:16px;color:#0f1d38;font-weight:normal;text-decoration:underline;text-shadow:0 0 2px #fff,0 0 3px #fff,0 0 5px rgba(255,255,255,0.6)">0</div>
<div class="t" style="left:777.8px;width:140px;text-align:center;top:398.7px;font-size:12px;line-height:16px;color:#0f1d38;font-weight:normal;text-decoration:underline;text-shadow:0 0 2px #fff,0 0 3px #fff,0 0 5px rgba(255,255,255,0.6)">1 912 500</div>
<div class="t" style="left:777.8px;width:140px;text-align:center;top:436.4px;font-size:12px;line-height:16px;color:#0f1d38;font-weight:normal;text-decoration:underline;text-shadow:0 0 2px #fff,0 0 3px #fff,0 0 5px rgba(255,255,255,0.6)">0</div>
<div class="t" style="left:747.8px;width:200px;text-align:center;top:462.0px;font-size:14.2px;line-height:18px;color:#1d2b45;font-weight:normal;text-decoration:underline">2020 Q2 Target</div>
<div class="r" style="left:1193.90px;top:360px;width:122.4px;height:94px;background:#00ffff"></div>
<div class="t" style="left:1185.1px;width:140px;text-align:center;top:342.0px;font-size:11.4px;line-height:14px;color:#000;font-weight:normal;-webkit-text-stroke:0.1px #000">1 912 500</div>
<div class="t" style="left:1185.1px;width:140px;text-align:center;top:352.3px;font-size:12px;line-height:16px;color:#0f1d38;font-weight:normal;text-decoration:underline;text-shadow:0 0 2px #fff,0 0 3px #fff,0 0 5px rgba(255,255,255,0.6)">0</div>
<div class="t" style="left:1185.1px;width:140px;text-align:center;top:398.7px;font-size:12px;line-height:16px;color:#0f1d38;font-weight:normal;text-decoration:underline;text-shadow:0 0 2px #fff,0 0 3px #fff,0 0 5px rgba(255,255,255,0.6)">1 912 500</div>
<div class="t" style="left:1185.1px;width:140px;text-align:center;top:436.4px;font-size:12px;line-height:16px;color:#0f1d38;font-weight:normal;text-decoration:underline;text-shadow:0 0 2px #fff,0 0 3px #fff,0 0 5px rgba(255,255,255,0.6)">0</div>
<div class="t" style="left:1155.1px;width:200px;text-align:center;top:462.0px;font-size:14.2px;line-height:18px;color:#1d2b45;font-weight:normal;text-decoration:underline">2020 Q3 Target</div>
<div class="r" style="left:1600.90px;top:360px;width:122.4px;height:94px;background:#00ffff"></div>
<div class="t" style="left:1592.1px;width:140px;text-align:center;top:342.0px;font-size:11.4px;line-height:14px;color:#000;font-weight:normal;-webkit-text-stroke:0.1px #000">1 912 500</div>
<div class="t" style="left:1592.1px;width:140px;text-align:center;top:352.3px;font-size:12px;line-height:16px;color:#0f1d38;font-weight:normal;text-decoration:underline;text-shadow:0 0 2px #fff,0 0 3px #fff,0 0 5px rgba(255,255,255,0.6)">0</div>
<div class="t" style="left:1592.1px;width:140px;text-align:center;top:398.7px;font-size:12px;line-height:16px;color:#0f1d38;font-weight:normal;text-decoration:underline;text-shadow:0 0 2px #fff,0 0 3px #fff,0 0 5px rgba(255,255,255,0.6)">1 912 500</div>
<div class="t" style="left:1592.1px;width:140px;text-align:center;top:436.4px;font-size:12px;line-height:16px;color:#0f1d38;font-weight:normal;text-decoration:underline;text-shadow:0 0 2px #fff,0 0 3px #fff,0 0 5px rgba(255,255,255,0.6)">0</div>
<div class="t" style="left:1562.1px;width:200px;text-align:center;top:462.0px;font-size:14.2px;line-height:18px;color:#1d2b45;font-weight:normal;text-decoration:underline">2020 Q4 Target</div>
<div class="r" style="left:582.90px;top:325px;width:122.4px;height:29px;background:#0033a0"></div>
<div class="r" style="left:582.90px;top:354px;width:122.4px;height:77px;background:#90ee90"></div>
<div class="r" style="left:582.90px;top:431px;width:122.4px;height:8px;background:#ff0000"></div>
<div class="r" style="left:582.90px;top:439px;width:122.4px;height:15px;background:#ffff00"></div>
<div class="t" style="left:574.1px;width:140px;text-align:center;top:307.0px;font-size:11.4px;line-height:14px;color:#000;font-weight:normal;-webkit-text-stroke:0.1px #000">2 612 617</div>
<div class="t" style="left:574.1px;width:140px;text-align:center;top:331.5px;font-size:12px;line-height:16px;color:#0f1d38;font-weight:normal;text-decoration:underline;text-shadow:0 0 2px #fff,0 0 3px #fff,0 0 5px rgba(255,255,255,0.6)">612 617</div>
<div class="t" style="left:574.1px;width:140px;text-align:center;top:383.6px;font-size:12px;line-height:16px;color:#0f1d38;font-weight:normal;text-decoration:underline;text-shadow:0 0 2px #fff,0 0 3px #fff,0 0 5px rgba(255,255,255,0.6)">1 543 920</div>
<div class="t" style="left:574.1px;width:140px;text-align:center;top:436.7px;font-size:12px;line-height:16px;color:#0f1d38;font-weight:normal;text-decoration:underline;text-shadow:0 0 2px #fff,0 0 3px #fff,0 0 5px rgba(255,255,255,0.6)">321 824</div>
<div class="t" style="left:544.1px;width:200px;text-align:center;top:462.0px;font-size:14.2px;line-height:18px;color:#1d2b45;font-weight:normal;text-decoration:underline">2020 Q2</div>
<div class="r" style="left:684px;top:381px;width:40px;height:12px;background:#dcdcdc;border-radius:3px"></div>
<div class="t" style="left:674.0px;width:60px;text-align:center;top:381.0px;font-size:9.2px;line-height:12px;color:#666;font-weight:bold;">1-10/11</div>
<div class="r" style="left:990.20px;top:315px;width:122.4px;height:49px;background:#0033a0"></div>
<div class="r" style="left:990.20px;top:364px;width:122.4px;height:51px;background:#90ee90"></div>
<div class="r" style="left:990.20px;top:415px;width:122.4px;height:24px;background:#ff0000"></div>
<div class="r" style="left:990.20px;top:439px;width:122.4px;height:15px;background:#ffff00"></div>
<div class="t" style="left:981.4px;width:140px;text-align:center;top:297.0px;font-size:11.4px;line-height:14px;color:#000;font-weight:normal;-webkit-text-stroke:0.1px #000">2 829 510</div>
<div class="t" style="left:981.4px;width:140px;text-align:center;top:330.4px;font-size:12px;line-height:16px;color:#0f1d38;font-weight:normal;text-decoration:underline;text-shadow:0 0 2px #fff,0 0 3px #fff,0 0 5px rgba(255,255,255,0.6)">988 891</div>
<div class="t" style="left:981.4px;width:140px;text-align:center;top:355.8px;font-size:12px;line-height:16px;color:#0f1d38;font-weight:normal;text-decoration:underline;text-shadow:0 0 2px #fff,0 0 3px #fff,0 0 5px rgba(255,255,255,0.6)">0</div>
<div class="t" style="left:981.4px;width:140px;text-align:center;top:380.4px;font-size:12px;line-height:16px;color:#0f1d38;font-weight:normal;text-decoration:underline;text-shadow:0 0 2px #fff,0 0 3px #fff,0 0 5px rgba(255,255,255,0.6)">1 042 015</div>
<div class="t" style="left:981.4px;width:140px;text-align:center;top:418.6px;font-size:12px;line-height:16px;color:#0f1d38;font-weight:normal;text-decoration:underline;text-shadow:0 0 2px #fff,0 0 3px #fff,0 0 5px rgba(255,255,255,0.6)">475 127</div>
<div class="t" style="left:981.4px;width:140px;text-align:center;top:436.7px;font-size:12px;line-height:16px;color:#0f1d38;font-weight:normal;text-decoration:underline;text-shadow:0 0 2px #fff,0 0 3px #fff,0 0 5px rgba(255,255,255,0.6)">323 477</div>
<div class="t" style="left:951.4px;width:200px;text-align:center;top:462.0px;font-size:14.2px;line-height:18px;color:#1d2b45;font-weight:normal;text-decoration:underline">2020 Q3</div>
<div class="r" style="left:1397.40px;top:327px;width:122.4px;height:29px;background:#0033a0"></div>
<div class="r" style="left:1397.40px;top:356px;width:122.4px;height:17px;background:#90ee90"></div>
<div class="r" style="left:1397.40px;top:373px;width:122.4px;height:26px;background:#ff0000"></div>
<div class="r" style="left:1397.40px;top:399px;width:122.4px;height:55px;background:#ffff00"></div>
<div class="t" style="left:1388.6px;width:140px;text-align:center;top:308.8px;font-size:11.4px;line-height:14px;color:#000;font-weight:normal;-webkit-text-stroke:0.1px #000">2 594 504</div>
<div class="t" style="left:1388.6px;width:140px;text-align:center;top:333.3px;font-size:12px;line-height:16px;color:#0f1d38;font-weight:normal;text-decoration:underline;text-shadow:0 0 2px #fff,0 0 3px #fff,0 0 5px rgba(255,255,255,0.6)">618 640</div>
<div class="t" style="left:1388.6px;width:140px;text-align:center;top:356.5px;font-size:12px;line-height:16px;color:#0f1d38;font-weight:normal;text-decoration:underline;text-shadow:0 0 2px #fff,0 0 3px #fff,0 0 5px rgba(255,255,255,0.6)">329 357</div>
<div class="t" style="left:1388.6px;width:140px;text-align:center;top:377.6px;font-size:12px;line-height:16px;color:#0f1d38;font-weight:normal;text-decoration:underline;text-shadow:0 0 2px #fff,0 0 3px #fff,0 0 5px rgba(255,255,255,0.6)">521 144</div>
<div class="t" style="left:1388.6px;width:140px;text-align:center;top:417.4px;font-size:12px;line-height:16px;color:#0f1d38;font-weight:normal;text-decoration:underline;text-shadow:0 0 2px #fff,0 0 3px #fff,0 0 5px rgba(255,255,255,0.6)">1 125 363</div>
<div class="t" style="left:1358.6px;width:200px;text-align:center;top:462.0px;font-size:14.2px;line-height:18px;color:#1d2b45;font-weight:normal;text-decoration:underline">2020 Q4</div>
<div class="r" style="left:1784px;top:288px;width:16px;height:14px;background:#0033a0"></div>
<div class="t " style="left:1805px;top:287.2px;font-size:14.3px;line-height:18px;color:#777;font-weight:normal;">Active</div>
<div class="r" style="left:1784px;top:307px;width:16px;height:14px;background:#00ffff"></div>
<div class="t " style="left:1805px;top:306.2px;font-size:14.3px;line-height:18px;color:#777;font-weight:normal;">Target</div>
<div class="r" style="left:1784px;top:326px;width:16px;height:14px;background:#90ee90"></div>
<div class="t " style="left:1805px;top:325.2px;font-size:14.3px;line-height:18px;color:#777;font-weight:normal;">Closed</div>
<div class="r" style="left:1784px;top:345px;width:16px;height:14px;background:#00ff00"></div>
<div class="t " style="left:1805px;top:344.2px;font-size:14.3px;line-height:18px;color:#777;font-weight:normal;">Approved</div>
<div class="r" style="left:1784px;top:364px;width:16px;height:14px;background:#ff0000"></div>
<div class="t " style="left:1805px;top:363.2px;font-size:14.3px;line-height:18px;color:#777;font-weight:normal;">Strategy</div>
<div class="r" style="left:1784px;top:383px;width:16px;height:14px;background:#ffff00"></div>
<div class="t " style="left:1805px;top:382.2px;font-size:14.3px;line-height:18px;color:#777;font-weight:normal;">Project Idea</div>
<div class="r" style="left:737px;top:166px;width:51px;height:24px;border:1px solid #c6c6c6;border-radius:3px;box-sizing:border-box;background:linear-gradient(#fdfdfd,#ececec)"></div>
<div class="t" style="left:612.5px;width:300px;text-align:center;top:169.5px;font-size:12.7px;line-height:17px;color:#222;font-weight:normal;">back</div>
<div class="r" style="left:796px;top:166px;width:84px;height:24px;border:1px solid #c6c6c6;border-radius:3px;box-sizing:border-box;background:linear-gradient(#fdfdfd,#ececec)"></div>
<div class="t " style="left:830.5px;top:169.5px;font-size:12.7px;line-height:17px;color:#222;font-weight:normal;">Export</div>
<svg class="r" style="left:806px;top:171px;" width="17" height="15" viewBox="0 0 17 15"><rect x="6" y="2" width="10" height="11" fill="#dff0e3" stroke="#9ccba8" stroke-width="0.8"/><path d="M9 2V13M12.5 2V13" stroke="#9ccba8" stroke-width="0.8"/><path d="M1 2.5L9 1V14L1 12.5Z" fill="#1e8a3e"/><path d="M3 5L6.5 10M6.5 5L3 10" stroke="#7fd39a" stroke-width="0.9"/></svg>
<div class="r" style="left:888px;top:166px;width:84px;height:24px;border:1px solid #c6c6c6;border-radius:3px;box-sizing:border-box;background:linear-gradient(#fdfdfd,#ececec)"></div>
<div class="r" style="left:893px;top:171px;width:15px;height:14px;background:#ff0000;border:1px solid #555;border-radius:3px;box-sizing:border-box"></div>
<div class="t " style="left:912.5px;top:169.5px;font-size:12.7px;line-height:17px;color:#222;font-weight:normal;">Strategy</div>
<div class="r" style="left:980px;top:166px;width:105px;height:24px;border:1px solid #c6c6c6;border-radius:3px;box-sizing:border-box;background:linear-gradient(#fdfdfd,#ececec)"></div>
<div class="r" style="left:985px;top:171px;width:15px;height:14px;background:#ffff00;border:1px solid #555;border-radius:3px;box-sizing:border-box"></div>
<div class="t " style="left:1004.5px;top:169.5px;font-size:12.7px;line-height:17px;color:#222;font-weight:normal;">Project Idea</div>
<div class="r" style="left:1093px;top:166px;width:71px;height:24px;border:1px solid #c6c6c6;border-radius:3px;box-sizing:border-box;background:linear-gradient(#fdfdfd,#ececec)"></div>
<div class="r" style="left:1098px;top:171px;width:15px;height:14px;background:#0033a0;border:1px solid #555;border-radius:3px;box-sizing:border-box"></div>
<div class="t " style="left:1117px;top:169.5px;font-size:12.7px;line-height:17px;color:#222;font-weight:normal;">Active</div>
<div class="r" style="left:1172px;top:166px;width:75px;height:24px;border:1px solid #c6c6c6;border-radius:3px;box-sizing:border-box;background:linear-gradient(#fdfdfd,#ececec)"></div>
<div class="r" style="left:1177px;top:171px;width:15px;height:14px;background:#90ee90;border:1px solid #555;border-radius:3px;box-sizing:border-box"></div>
<div class="t " style="left:1196.5px;top:169.5px;font-size:12.7px;line-height:17px;color:#222;font-weight:normal;">Closed</div>
<div class="r" style="left:1255px;top:166px;width:91px;height:24px;border:1px solid #c6c6c6;border-radius:3px;box-sizing:border-box;background:linear-gradient(#fdfdfd,#ececec)"></div>
<div class="r" style="left:1260px;top:171px;width:15px;height:14px;background:#00f000;border:1px solid #555;border-radius:3px;box-sizing:border-box"></div>
<div class="t " style="left:1279px;top:169.5px;font-size:12.7px;line-height:17px;color:#222;font-weight:normal;">Approved</div>
<div class="r" style="left:1354px;top:166px;width:86px;height:24px;border:1px solid #c6c6c6;border-radius:3px;box-sizing:border-box;background:linear-gradient(#fdfdfd,#ececec)"></div>
<div class="r" style="left:1359px;top:171px;width:15px;height:14px;background:#a0a0a0;border:1px solid #555;border-radius:3px;box-sizing:border-box"></div>
<div class="t " style="left:1378px;top:169.5px;font-size:12.7px;line-height:17px;color:#222;font-weight:normal;">Rejected</div>
<div class="r" style="left:1448px;top:166px;width:89px;height:24px;border:1px solid #c6c6c6;border-radius:3px;box-sizing:border-box;background:linear-gradient(#fdfdfd,#ececec)"></div>
<div class="r" style="left:1453px;top:171px;width:15px;height:14px;background:#d0d0d0;border:1px solid #555;border-radius:3px;box-sizing:border-box"></div>
<div class="t " style="left:1472px;top:169.5px;font-size:12.7px;line-height:17px;color:#222;font-weight:normal;">Canceled</div>
<div class="r" style="left:1545px;top:166px;width:72px;height:24px;border:1px solid #c6c6c6;border-radius:3px;box-sizing:border-box;background:linear-gradient(#fdfdfd,#ececec)"></div>
<div class="r" style="left:1550px;top:171px;width:15px;height:14px;background:#00ffff;border:1px solid #555;border-radius:3px;box-sizing:border-box"></div>
<div class="t " style="left:1569px;top:169.5px;font-size:12.7px;line-height:17px;color:#222;font-weight:normal;">Target</div>
<div class="t " style="left:610px;top:148.0px;font-size:11.1px;line-height:14px;color:#111;font-weight:bold;">Drill Down</div>
<div class="r" style="left:608px;top:165px;width:122px;height:26px;background:#fff;border:2px solid #5b9dea;border-radius:4px;box-sizing:border-box;box-shadow:0 0 3px rgba(60,130,230,0.6)"></div>
<div class="r" style="left:703px;top:167px;width:1px;height:22px;background:#d8d8d8"></div>
<svg class="r" style="left:710px;top:175px;" width="12" height="8" viewBox="0 0 12 8"><path d="M1.2 1.5L6 6.3L10.8 1.5" fill="none" stroke="#9a9a9a" stroke-width="2.6"/></svg>
<div class="r" style="left:616px;top:170px;width:46px;height:17px;background:#1565d8"></div>
<div class="t " style="left:616px;top:170.0px;font-size:12.6px;line-height:16px;color:#fff;font-weight:normal;">Quarter</div>
<div class="r" style="left:607px;top:193px;width:122px;height:187px;background:#fff;border:1px solid #d0d0d0;border-radius:3px;box-sizing:border-box;box-shadow:0 1px 3px rgba(0,0,0,0.15)"></div>
<div class="r" style="left:611px;top:250px;width:114px;height:18px;background:linear-gradient(#2486e6,#1565cc);border-radius:3px"></div>
<div class="t " style="left:617px;top:198.0px;font-size:12.6px;line-height:16px;color:#444;font-weight:normal;">Sub-Division</div>
<div class="t " style="left:617px;top:216.0px;font-size:12.6px;line-height:16px;color:#444;font-weight:normal;">Function</div>
<div class="t " style="left:617px;top:234.0px;font-size:12.6px;line-height:16px;color:#444;font-weight:normal;">Year</div>
<div class="t " style="left:617px;top:252.0px;font-size:12.6px;line-height:16px;color:#fff;font-weight:normal;">Quarter</div>
<div class="t " style="left:617px;top:270.0px;font-size:12.6px;line-height:16px;color:#444;font-weight:normal;">Month</div>
<div class="t " style="left:617px;top:288.0px;font-size:12.6px;line-height:16px;color:#444;font-weight:normal;">Region</div>
<div class="t " style="left:617px;top:306.0px;font-size:12.6px;line-height:16px;color:#444;font-weight:normal;">Country</div>
<div class="t " style="left:617px;top:324.0px;font-size:12.6px;line-height:16px;color:#444;font-weight:normal;">Legal Entity</div>
<div class="t " style="left:617px;top:342.0px;font-size:12.6px;line-height:16px;color:#444;font-weight:normal;">Category</div>
<div class="t " style="left:617px;top:360.0px;font-size:12.6px;line-height:16px;color:#444;font-weight:normal;">Sub-Category</div>
<svg class="r" style="left:715px;top:366px;" width="10" height="6" viewBox="0 0 10 6"><path d="M1 1H9L5 5Z" fill="#d0d0d0"/></svg>
<div class="r" style="left:604px;top:144px;width:129px;height:239px;border:1px solid #e0303a;box-sizing:border-box"></div>
<div class="t" style="left:830.0px;width:300px;text-align:center;top:204.0px;font-size:25.9px;line-height:30px;color:#1c74d8;font-weight:normal;">2020</div>
</body></html>
